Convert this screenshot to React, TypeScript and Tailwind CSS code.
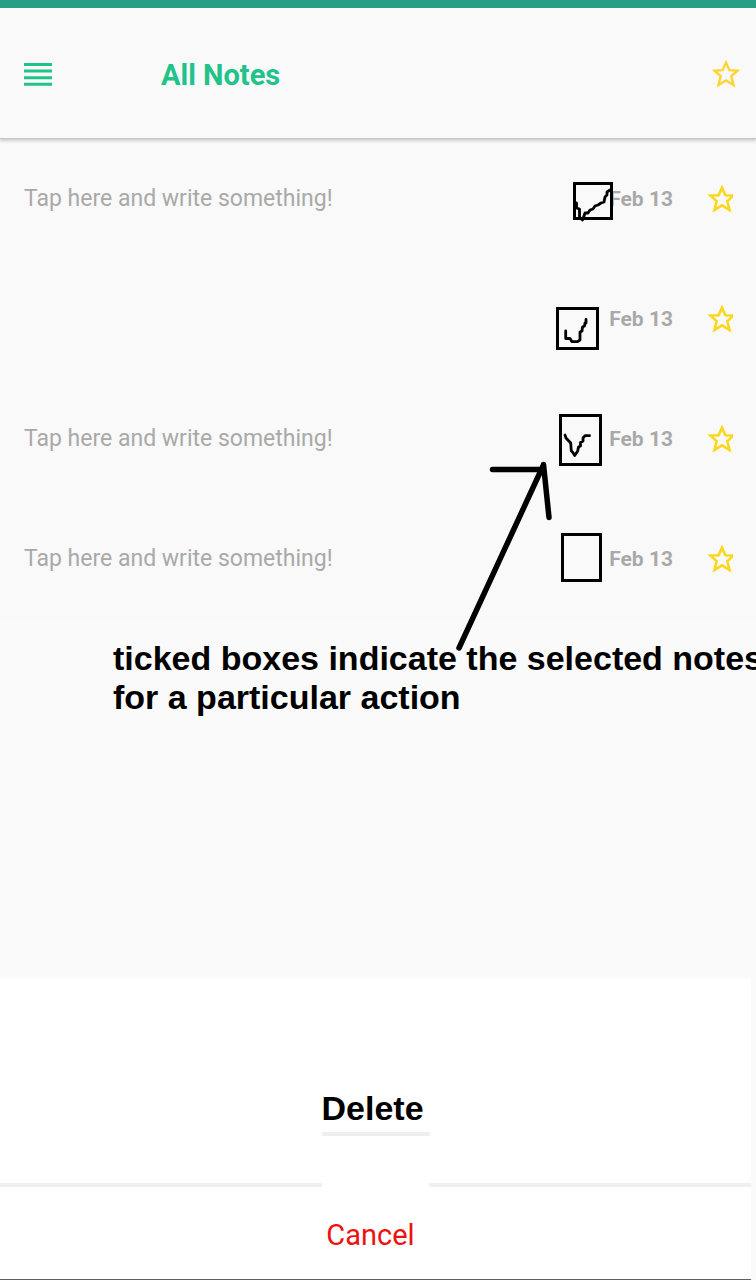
import { useState } from "react";

interface Note {
  id: number;
  text: string;
  date: string;
  checked: boolean;
  boxClass: string;
  tick: string;
}

// Each tick box is sketched by hand, so its size, place and stroke differ per note
const NOTES: Note[] = [
  {
    id: 1, text: "Tap here and write something!", date: "Feb 13", checked: true,
    boxClass: "right-[143px] top-[43px] w-[40px] h-[38px]",
    tick: "M3.500 21V26L6.500 27V35L9.500 38L11 34L12 31H15L17 28L20 27L22 24L25 23L28 21L31 20L32 15L34 13L34 10L37 8",
  },
  {
    id: 2, text: "", date: "Feb 13", checked: true,
    boxClass: "right-[157px] top-[48px] w-[43px] h-[43px]",
    tick: "M9.700 24V31.500H14L16 34.700H21.500L24 33V25L26 24L26.500 20L28.500 19L29 16L30 16V12.500",
  },
  {
    id: 3, text: "Tap here and write something!", date: "Feb 13", checked: true,
    boxClass: "right-[154px] top-[35px] w-[43px] h-[52px]",
    tick: "M6 21L7 24L11.700 29L12.300 37L13.500 38L15.700 41.500L18.700 37L19.500 33L21.500 32V28.500L24 27L24 24L26 21.700H30.500",
  },
  {
    id: 4, text: "Tap here and write something!", date: "Feb 13", checked: false,
    boxClass: "right-[154px] top-[34px] w-[41px] h-[49px]",
    tick: "M9 24L15 34L30 14",
  },
];

const STAR_PATH =
  "M15 3.600L18.400 11.200L26.500 11.700L20.300 17.100L22.500 26L15 21.400L7.500 26L9.700 17.100L3.500 11.700L11.600 11.200Z";

function NoteRow({ note }: { note: Note }) {
  const [checked, setChecked] = useState(note.checked);

  return (
    <li className="relative flex h-[120px] items-center pl-6 pr-[23px]">
      <button type="button" aria-label={note.text || "Empty note"} className="min-w-0 flex-1 truncate text-left text-[23px] leading-7 text-[#a9a9a9]">
        {note.text}
      </button>
      <time className="mr-[34px] text-[21px] leading-7 font-bold text-[#a9a9a9]">{note.date}</time>
      <button type="button" aria-label="Favourite" className="pb-0.5">
        {/* right tip of the star is cut off by its box */}
        <svg viewBox="0 0 26 29" className="h-[29px] w-[26px] stroke-[#fdd71b]" fill="none" strokeWidth="2.6" strokeMiterlimit="10">
          <path d={STAR_PATH} />
        </svg>
      </button>

      <label className={`absolute block ${note.boxClass}`}>
        <input
          type="checkbox"
          aria-label="Select note"
          checked={checked}
          onChange={e => setChecked(e.target.checked)}
          className="block size-full appearance-none border-3 border-black"
        />
        {checked && (
          <svg className="pointer-events-none absolute inset-0 size-full overflow-visible" fill="none" stroke="black" strokeWidth="2.8" strokeLinecap="round" strokeLinejoin="round">
            <path d={note.tick} />
          </svg>
        )}
      </label>
    </li>
  );
}

export default function App() {
  return (
    <div className="flex min-h-screen flex-col overflow-hidden bg-[#fafafa] font-[Roboto,sans-serif]">
      <header className="relative z-10 flex h-[139px] items-center border-t-8 border-b border-t-[#279f85] border-b-[#c4c4c4] bg-[#f9f9f9] pl-6 pr-[15px] shadow-[0_2px_3px_rgba(0,0,0,0.18)]">
        <div className="flex flex-1 items-center pt-[3px]">
          <button type="button" aria-label="Menu">
            <svg viewBox="0 0 28 23" className="h-[23px] w-[28px] fill-[#22c28b]">
              <path d="M0 0h28v3H0zM0 6.6h28v3H0zM0 13.2h28v3H0zM0 19.8h28v3H0z" />
            </svg>
          </button>
          <h1 className="ml-[109px] text-[29px] leading-8 font-bold text-[#22c28b]">All Notes</h1>
        </div>
        <button type="button" aria-label="Favourites">
          <svg viewBox="0 0 30 29" className="h-[29px] w-[30px] stroke-[#fcd535]" fill="none" strokeWidth="2.4" strokeMiterlimit="10">
            <path d={STAR_PATH} />
          </svg>
        </button>
      </header>

      <ul className="bg-[#f9f9f9]">
        {NOTES.map(note => <NoteRow key={note.id} note={note} />)}
      </ul>

      <section className="relative flex-1 pt-5 pb-10 pl-[113px]">
        {/* Arrow from the caption up to the tick boxes */}
        <svg viewBox="450 456 110 200" className="pointer-events-none absolute right-[196px] -top-[163px] h-[200px] w-[110px]" fill="none" stroke="black" strokeWidth="5.5" strokeLinecap="round" strokeLinejoin="round">
          <path d="M459 648L543 466M492.500 469.500H540M543.500 464.500L549 517.500" />
        </svg>
        <p className="font-['Liberation_Sans',Arial,sans-serif] text-[34px] leading-[39px] font-bold whitespace-nowrap text-black">
          ticked boxes indicate the selected notes
          <br />
          for a particular action
        </p>
      </section>

      <div className="mr-[5px] flex flex-col border-b border-[#606060] bg-white">
        <div className="flex justify-center pt-[110px] pb-[47px]">
          <button type="button" className="w-[108px] border-b-4 border-[#efefef] pb-1 text-left font-['Liberation_Sans',Arial,sans-serif] text-[34px] leading-10 font-bold text-black">
            Delete
          </button>
        </div>
        <div className="flex gap-[107px]">
          <div className="h-1 flex-1 bg-[#efefef]" />
          <div className="h-1 flex-1 bg-[#efefef]" />
        </div>
        <button type="button" className="pt-8 pr-[10px] pb-7 text-center text-[29px] leading-8 text-[#ee1111]">
          Cancel
        </button>
      </div>
    </div>
  );
}
